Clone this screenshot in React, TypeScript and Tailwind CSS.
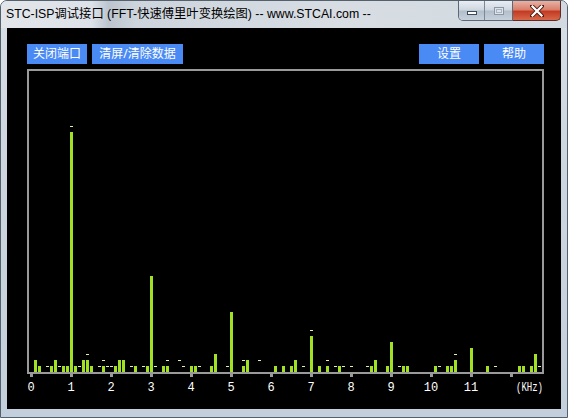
const BARS: Record<number, number> = {
  1: 12, 2: 6, 5: 6, 6: 12, 8: 6, 9: 6, 10: 240, 11: 6, 13: 12, 14: 12, 15: 6,
  18: 6, 21: 6, 22: 12, 23: 12, 26: 6, 29: 6, 30: 96, 33: 6, 34: 6, 40: 6,
  41: 6, 45: 6, 46: 18, 50: 60, 53: 6, 54: 12, 61: 6, 63: 6, 65: 6, 66: 12,
  70: 36, 72: 6, 74: 6, 77: 6, 85: 6, 86: 12, 89: 6, 90: 30, 93: 6, 94: 6,
  101: 6, 104: 6, 105: 6, 106: 12, 110: 24, 114: 6, 122: 6, 123: 6, 125: 6,
  126: 18,
};

// peak-hold markers (height above baseline)
const PEAKS: Record<number, number> = {
  4: 6, 7: 6, 10: 246, 12: 6, 14: 18, 17: 6, 18: 12, 19: 6, 20: 6, 25: 6,
  28: 6, 31: 6, 34: 12, 37: 12, 38: 6, 42: 6, 49: 6, 53: 12, 57: 12, 68: 6,
  70: 42, 74: 12, 76: 6, 78: 6, 80: 6, 84: 6, 92: 6, 102: 6, 106: 18,
  116: 6, 127: 6,
};

const BASE = 372;
const AXIS = "#9a9a9a";

function Chart() {
  const bins = Array.from({ length: 128 }, (_, i) => i);
  const ticks = Array.from({ length: 13 }, (_, k) => k);
  return (
    <svg width={554} height={345} viewBox="7 64 554 345" className="block">
      {/* axis box */}
      <rect x={27} y={69} width={517} height={2} fill={AXIS} />
      <rect x={27} y={69} width={2} height={305} fill={AXIS} />
      <rect x={542} y={69} width={2} height={305} fill={AXIS} />
      <rect x={27} y={372} width={517} height={2} fill={AXIS} />
      {ticks.map((k) => (
        <rect key={k} x={30 + 40 * k} y={374} width={3} height={3} fill={AXIS} />
      ))}
      {bins.map((i) => {
        const h = BARS[i] ?? 0;
        const p = PEAKS[i] ?? 0;
        return (
          <g key={i}>
            {h > 0 && (
              <rect x={30 + 4 * i} y={BASE - h} width={3} height={h} fill="#a2e024" />
            )}
            {p > h && (
              <rect x={30 + 4 * i} y={BASE - p} width={3} height={1} fill="#e4f0a8" />
            )}
          </g>
        );
      })}
      {ticks.slice(0, 12).map((k) => (
        <text
          key={k}
          x={31 + 40 * k}
          y={391}
          textAnchor="middle"
          fill="#ffffff"
          fontSize={12}
          fontFamily="'Liberation Mono', monospace"
        >
          {k}
        </text>
      ))}
      <text
        x={516}
        y={391}
        fill="#ffffff"
        fontSize={12}
        fontFamily="'Liberation Mono', monospace"
        textLength={27}
        lengthAdjust="spacingAndGlyphs"
      >
        (KHz)
      </text>
    </svg>
  );
}

function CaptionButtons() {
  return (
    <div className="flex h-[20px] self-start">
      <div className="flex rounded-bl-[5px] border border-t-0 border-[#5b6878] overflow-hidden">
        <div className="flex h-[19px] w-[26px] items-end justify-center border-r border-[#7c8896] bg-[linear-gradient(180deg,#e9eef3_0%,#cfd7e0_45%,#b3bfcc_55%,#c7d1dc_100%)] pb-[5px]">
          <div className="h-[4px] w-[10px] border border-[#3d4a5a] bg-white" />
        </div>
        <div className="flex h-[19px] w-[27px] items-center justify-center bg-[linear-gradient(180deg,#e9eef3_0%,#cfd7e0_45%,#b3bfcc_55%,#c7d1dc_100%)]">
          <div className="h-[8px] w-[10px] border border-[#8a96a4] bg-[#dde3ea] p-[1px]">
            <div className="h-full w-full border border-[#aab4bf]" />
          </div>
        </div>
      </div>
      <div className="flex h-[20px] w-[48px] items-center justify-center rounded-br-[5px] border border-l-0 border-t-0 border-[#5b2d26] bg-[linear-gradient(180deg,#eab1a4_0%,#d8806c_45%,#c23b22_55%,#d8684a_100%)]">
        <svg width="14" height="12" viewBox="0 0 14 12">
          <path d="M2 1 L12 11 M12 1 L2 11" stroke="#4b2018" strokeWidth="4" strokeLinecap="square" />
          <path d="M2.5 1.5 L11.5 10.5 M11.5 1.5 L2.5 10.5" stroke="#ffffff" strokeWidth="2.2" strokeLinecap="square" />
        </svg>
      </div>
    </div>
  );
}

export default function App() {
  const btn =
    "flex h-[20px] items-center justify-center bg-[#4a8af4] text-[12px] text-white leading-none";
  return (
    <div
      className="flex h-[418px] w-[568px] flex-col overflow-hidden rounded-t-[7px] border border-[#55606d] bg-[linear-gradient(180deg,#d9dfe6_0%,#cfd7e0_30%,#c3cfdc_100%)]"
      style={{ fontFamily: "'Noto Sans', 'Noto Sans CJK SC', sans-serif" }}
    >
      <div className="flex h-[27px] shrink-0 items-start justify-between bg-[linear-gradient(90deg,#e2e6eb_0%,#dde2e8_16%,#bcc5cf_19%,#cdd4dc_24%,#d7dde3_60%,#d2d9e0_100%)] pr-[6px]">
        <div
          className="pl-[5px] pt-[5px] text-[12.3px] leading-[16px] text-black whitespace-nowrap"
          style={{ fontFamily: "'Liberation Sans', 'Noto Sans CJK SC', sans-serif" }}
        >
          STC-ISP调试接口 (FFT-快速傅里叶变换绘图) -- www.STCAI.com --
        </div>
        <CaptionButtons />
      </div>
      <div className="mx-[6px] flex h-[381px] shrink-0 flex-col bg-black">
        <div className="flex justify-between pl-[20px] pr-[17px] pt-[16px]">
          <div className="flex gap-[5px]">
            <div className={`${btn} w-[60px]`}>关闭端口</div>
            <div className={`${btn} w-[91px]`}>清屏/清除数据</div>
          </div>
          <div className="flex gap-[5px]">
            <div className={`${btn} w-[60px]`}>设置</div>
            <div className={`${btn} w-[60px]`}>帮助</div>
          </div>
        </div>
        <Chart />
      </div>
    </div>
  );
}
